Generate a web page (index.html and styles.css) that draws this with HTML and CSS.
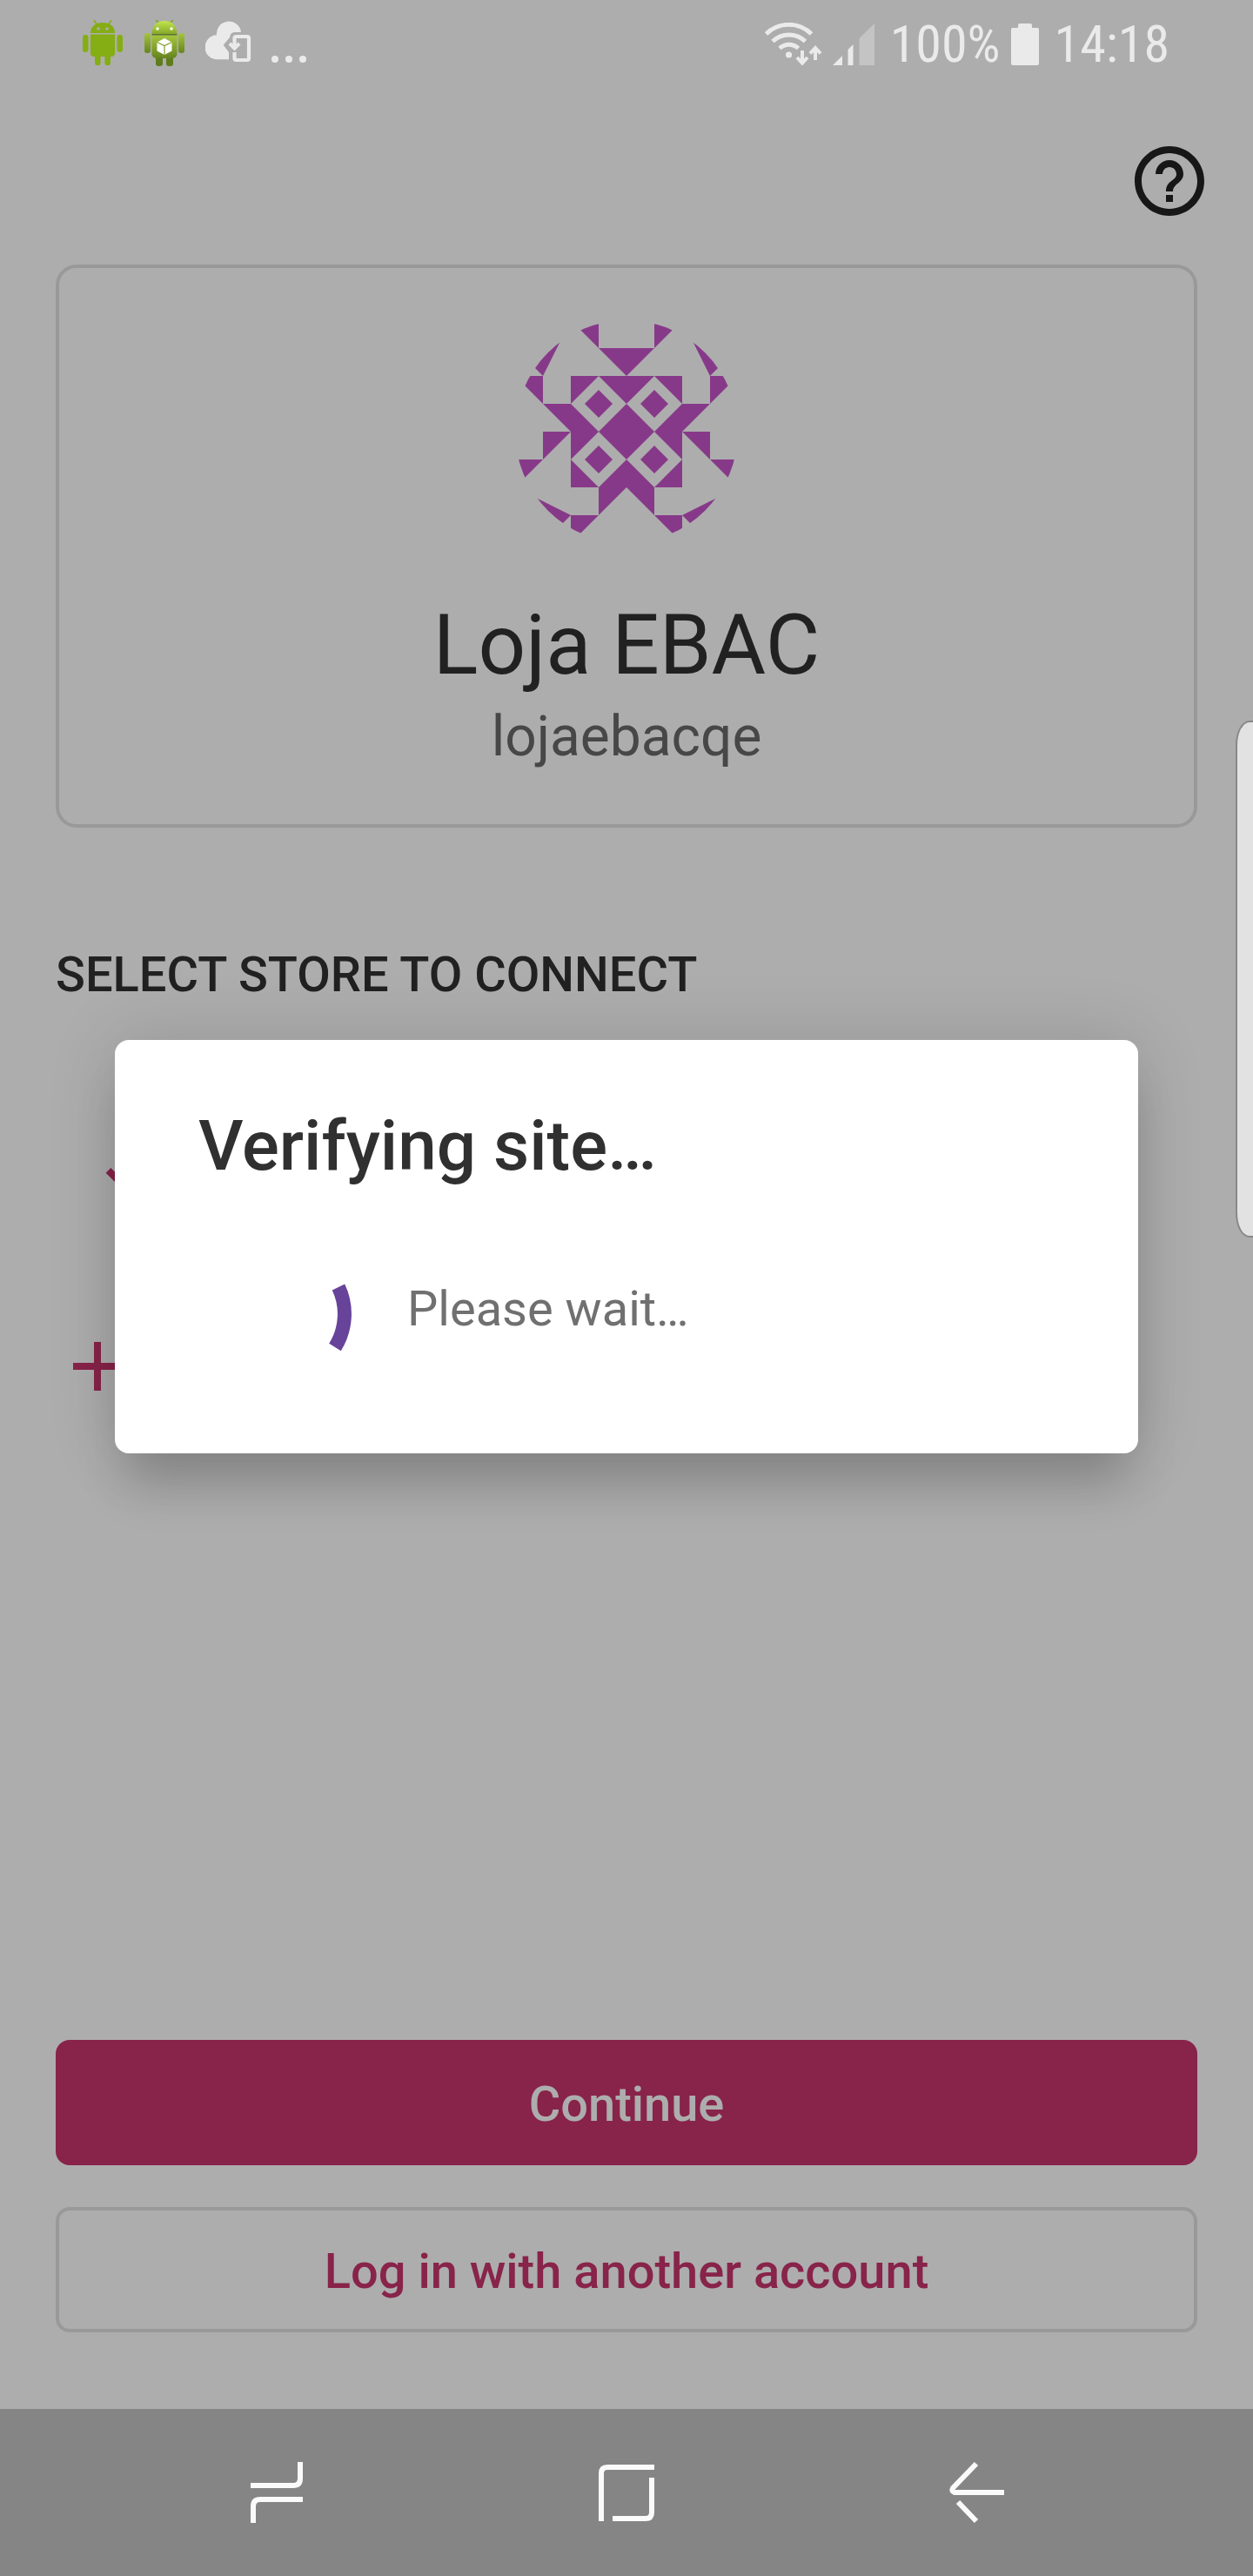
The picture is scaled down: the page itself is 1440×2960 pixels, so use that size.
FILE: index.html
```html
<!DOCTYPE html>
<html lang="en">
<head>
<meta charset="utf-8">
<meta name="viewport" content="width=device-width, initial-scale=1">
<title>Select store</title>
<link rel="stylesheet" href="styles.css">
</head>
<body>
<div class="screen">
  <header class="status-bar">
    <div class="status-group status-notifications">
      <svg width="48" height="56" viewBox="0 2 48 56" fill="#85ad14" aria-hidden="true">
        <path d="M10 17C10 9 16 5 24 5s14 4 14 12z"/>
        <path d="M14 2l4 6M34 2l-4 6" stroke="#85ad14" stroke-width="1.5"/>
        <circle cx="19" cy="12" r="1.8" fill="#adadad"/><circle cx="29" cy="12" r="1.8" fill="#adadad"/>
        <path d="M10 18.500h28V40a4 4 0 0 1-4 4h-1v7a3.300 3.300 0 0 1-6.600 0v-7h-4.800v7a3.300 3.300 0 0 1-6.600 0v-7h-1a4 4 0 0 1-4-4z"/>
        <rect x="1" y="19" width="6.500" height="20" rx="3.200"/><rect x="40.500" y="19" width="6.500" height="20" rx="3.200"/>
      </svg>
      <svg width="48" height="56" viewBox="0 2 48 56" aria-hidden="true">
        <defs>
          <linearGradient id="droid-head" x1="0" y1="0" x2="0" y2="1"><stop offset="0" stop-color="#c3e64d"/><stop offset="1" stop-color="#86a82a"/></linearGradient>
          <linearGradient id="droid-body" x1="0" y1="0" x2="0" y2="1"><stop offset="0" stop-color="#a4c63c"/><stop offset="1" stop-color="#66841f"/></linearGradient>
        </defs>
        <path d="M14 1l4 6M34 1l-4 6" stroke="#86a82a" stroke-width="2"/>
        <rect x="14" y="40" width="8" height="15" rx="3" fill="#5f7d1c"/><rect x="26" y="40" width="8" height="15" rx="3" fill="#5f7d1c"/>
        <rect x="1" y="17" width="7" height="23" rx="3" fill="url(#droid-body)"/><rect x="40" y="17" width="7" height="23" rx="3" fill="url(#droid-body)"/>
        <path d="M9.500 18C9.500 8 16 3 24 3s14.500 5 14.500 15z" fill="url(#droid-head)"/>
        <path d="M9.500 19.500h29V41q0 5-7 5h-15q-7 0-7-5z" fill="url(#droid-body)"/>
        <path d="M9.500 18.800h29" stroke="#55701c" stroke-width="1.400"/>
        <circle cx="16" cy="12" r="1.700" fill="#fff"/><circle cx="32" cy="12" r="1.700" fill="#fff"/>
        <path d="M24 23l8.500 4.500v10L24 42l-8.500-4.500v-10z" fill="#fff"/>
        <path d="M15.500 27.500l8.500 4 8.500-4M24 31.500V42" fill="none" stroke="#7f9f2d" stroke-width="1.200"/>
      </svg>
      <svg width="53" height="56" viewBox="0 0 53 56" aria-hidden="true">
        <path fill="#eaeaea" d="M14 45.300a14 14 0 0 1-1-28A14 14 0 0 1 41 14H34q-5.500 0-6 6L20.700 28.700 27 37v8.300z"/>
        <path fill="none" stroke="#eaeaea" stroke-width="4.200" d="M33.500 33V21q0-2 2-2H48q2 0 2 2v23q0 2-2 2H35.500q-2 0-2-2v-7M28 27l5.500 5.500L39 27"/>
      </svg>
      <svg width="40" height="56" viewBox="0 0 40 56" fill="#eaeaea" aria-hidden="true"><circle cx="4" cy="45" r="4"/><circle cx="20" cy="45" r="4"/><circle cx="36" cy="45" r="4"/></svg>
    </div>
    <div class="status-group status-system">
      <svg width="66" height="50" viewBox="0 0 66 50" fill="none" stroke="#eaeaea" aria-hidden="true">
        <path stroke-width="5" d="M1.500 13a37 37 0 0 1 52 0M9 21.500a27 27 0 0 1 37.500 0M17 29.500a16 16 0 0 1 21.500 0"/>
        <circle cx="27.500" cy="37" r="3.600" fill="#eaeaea" stroke="none"/>
        <path stroke-width="4" d="M43 32v13M37 40l6 6.500 6-6.500M58 43V31M52 35.500l6-6.500 6 6.500"/>
      </svg>
      <svg width="48" height="50" viewBox="0 0 48 50" aria-hidden="true">
        <path fill="#eaeaea" d="M0 49l11-11v11zM17.500 49V31l6-6v24z"/><path fill="#c4c4c4" d="M30.500 49V18L48 1v48z"/>
      </svg>
      <span class="battery-level">100%</span>
      <svg width="32" height="50" viewBox="0 0 32 50" fill="#eaeaea" aria-hidden="true"><path d="M8 6V3q0-2 2-2h12q2 0 2 2v3h6q2 0 2 2v39q0 2-2 2H2q-2 0-2-2V8q0-2 2-2z"/></svg>
      <time class="clock">14:18</time>
    </div>
  </header>

  <main class="content">
    <div class="toolbar">
      <button class="icon-button" type="button" aria-label="Help">
        <svg width="96" height="96" viewBox="0 0 24 24" fill="#171717" aria-hidden="true"><path d="M11 18h2v-2h-2v2zm1-16C6.480 2 2 6.480 2 12s4.480 10 10 10 10-4.480 10-10S17.520 2 12 2zm0 18c-4.410 0-8-3.590-8-8s3.590-8 8-8 8 3.590 8 8-3.590 8-8 8zm0-14c-2.210 0-4 1.790-4 4h2c0-1.100.9-2 2-2s2 .9 2 2c0 2-3 1.750-3 5h2c0-2.250 3-2.500 3-5 0-2.210-1.790-4-4-4z"/></svg>
      </button>
    </div>

    <section class="account-card">
      <svg class="avatar" viewBox="0 0 8 8" fill="#873989" role="img" aria-label="Avatar">
        <clipPath id="avatar-clip"><circle cx="4" cy="4" r="4"/></clipPath>
        <g clip-path="url(#avatar-clip)">
          <path d="M2 0h1v1zM6 0H5v1zM3 1h2L4 2zM2 0L1 2 0 1zM6 0l1 2 1-1zM0 2h1v1zM8 2H7v1zM1 4h1L1 5zM7 4H6l1 1zM0 5h1L0 6zM8 5H7l1 1zM2 7L0 6l1 2zM6 7l2-1-1 2zM2 7h1L2 8zM6 7H5l1 1z"/>
          <path d="M1 3h1v1zM7 3H6v1zM3 6h1L3 7zM5 6H4l1 1z"/>
          <path fill-rule="evenodd" d="M2 2h4v4H2zM3 2L2 3l1 1 1-1zM5 2L4 3l1 1 1-1zM3 4L2 5l1 1 1-1zM5 4L4 5l1 1 1-1z"/>
          <path d="M3 2.500l.5.500-.5.500-.5-.5zM5 2.500l.5.500-.5.500-.5-.5zM3 4.500l.5.500-.5.500-.5-.5zM5 4.500l.5.500-.5.500-.5-.5z"/>
        </g>
      </svg>
      <h1 class="account-name">Loja EBAC</h1>
      <p class="account-user">lojaebacqe</p>
    </section>

    <section class="stores">
      <h2 class="section-title">SELECT STORE TO CONNECT</h2>
      <div class="store-list">
        <svg class="store-check" viewBox="0 0 24 24" fill="#88234a" aria-hidden="true"><path d="M9 16.170L4.830 12l-1.420 1.410L9 19 21 7l-1.410-1.410z"/></svg>
        <svg class="store-add" viewBox="0 0 24 24" fill="#88234a" aria-hidden="true"><path d="M19 13h-6v6h-2v-6H5v-2h6V5h2v6h6z"/></svg>
      </div>
    </section>

    <div class="actions">
      <button class="button button-primary" type="button">Continue</button>
      <button class="button button-outline" type="button">Log in with another account</button>
    </div>
  </main>

  <nav class="nav-bar">
    <button class="icon-button" type="button" aria-label="Recent apps">
      <svg width="96" height="96" viewBox="0 0 96 96" fill="none" stroke="#fafafa" stroke-width="6" aria-hidden="true"><path d="M75 13v19q0 8-8 8H18M78 56H29q-8 0-8 8v19"/></svg>
    </button>
    <button class="icon-button" type="button" aria-label="Home">
      <svg width="96" height="96" viewBox="0 0 96 96" fill="none" stroke="#fafafa" stroke-width="6" aria-hidden="true"><path d="M19 81V26q0-7 7-7h54M77 31v40q0 7-7 7H32"/></svg>
    </button>
    <button class="icon-button" type="button" aria-label="Back">
      <svg width="96" height="96" viewBox="0 0 96 96" fill="none" stroke="#fafafa" stroke-width="6" aria-hidden="true"><path d="M80 48H23q-4-1-2-5l27-28M27 59l21 22"/></svg>
    </button>
  </nav>

  <div class="edge-handle"></div>

  <div class="overlay">
    <div class="dialog" role="dialog" aria-labelledby="dialog-title">
      <h2 class="dialog-title" id="dialog-title">Verifying site…</h2>
      <div class="dialog-body">
        <svg class="spinner" viewBox="0 0 192 192" fill="none" stroke="#674399" stroke-width="16" aria-hidden="true"><path d="M161 65a72 72 0 0 1-4 69"/></svg>
        <p class="dialog-text">Please wait…</p>
      </div>
    </div>
  </div>
</div>
</body>
</html>
```
FILE: styles.css
```css
* {
  box-sizing: border-box;
}

body,
h1,
h2,
p {
  margin: 0;
}

body {
  background: #adadad;
  font-family: Roboto, "Liberation Sans", sans-serif;
}

svg {
  display: block;
  flex: none;
}

button {
  font-family: inherit;
  cursor: pointer;
}

.screen {
  position: relative;
  display: flex;
  flex-direction: column;
  min-height: 100vh;
}

/* Status bar */

.status-bar {
  display: flex;
  justify-content: space-between;
  align-items: center;
  height: 96px;
  padding: 6px 96px 0 94px;
  color: #eaeaea;
  font-family: "Roboto Condensed", Roboto, sans-serif;
  font-size: 60px;
  line-height: 72px;
}

.status-group {
  display: flex;
  align-items: center;
}

.status-notifications {
  gap: 23px;
}

.status-system {
  gap: 12px;
}

.battery-level,
.clock {
  margin-left: 6px;
}

/* Main column */

.content {
  flex: 1;
  display: flex;
  flex-direction: column;
  padding: 64px 64px 88px;
}

.toolbar {
  display: flex;
  justify-content: flex-end;
  margin-right: -16px;
}

.icon-button {
  padding: 0;
  border: 0;
  background: none;
}

.account-card {
  display: flex;
  flex-direction: column;
  align-items: center;
  margin-top: 48px;
  padding: 60px 60px 62px;
  border: 4px solid #999;
  border-radius: 24px;
}

.avatar {
  width: 256px;
  height: 256px;
}

.account-name {
  margin-top: 61px;
  color: #212121;
  font-size: 96px;
  font-weight: 400;
  line-height: 112px;
}

.account-user {
  margin-top: 12px;
  color: #474747;
  font-size: 64px;
  line-height: 76px;
}

.section-title {
  margin-top: 137px;
  color: #212121;
  font-size: 56px;
  font-weight: 500;
  line-height: 64px;
}

.store-list {
  display: flex;
  flex-direction: column;
  gap: 132px;
  margin-top: 142px;
}

.store-check,
.store-add {
  width: 96px;
  height: 96px;
}

.store-check {
  margin-left: 44px;
}

.actions {
  display: flex;
  flex-direction: column;
  gap: 48px;
  margin-top: auto;
}

.button {
  height: 144px;
  padding: 4px 16px 0;
  border: 0;
  border-radius: 16px;
  font-size: 56px;
  font-weight: 500;
  line-height: 64px;
}

.button-primary {
  background: #88234a;
  color: #adadad;
}

.button-outline {
  border: 4px solid #999;
  background: none;
  color: #88234a;
}

/* System navigation */

.nav-bar {
  display: flex;
  justify-content: center;
  align-items: center;
  gap: 306px;
  height: 192px;
  background: #858585;
}

/* Layers above the page */

.edge-handle {
  position: absolute;
  top: 828px;
  right: 0;
  width: 20px;
  height: 594px;
  border: 2px solid #888;
  border-right: 0;
  border-radius: 16px 0 0 16px / 28px 0 0 28px;
  background: #e2e2e2;
}

.overlay {
  position: absolute;
  inset: 96px 0 192px;
  display: flex;
  align-items: center;
  padding: 0 132px;
}

.dialog {
  flex: 1;
  padding: 74px 96px 64px;
  border-radius: 16px;
  background: #fff;
  box-shadow: 0 48px 56px -12px rgba(0, 0, 0, 0.18), 0 0 80px rgba(0, 0, 0, 0.14);
}

.dialog-title {
  color: #303030;
  font-size: 80px;
  font-weight: 500;
  line-height: 96px;
}

.dialog-body {
  display: flex;
  align-items: center;
  gap: 48px;
  margin-top: 49px;
}

.spinner {
  width: 192px;
  height: 192px;
}

.dialog-text {
  padding-bottom: 12px;
  color: #707070;
  font-size: 56px;
  line-height: 64px;
}
```
